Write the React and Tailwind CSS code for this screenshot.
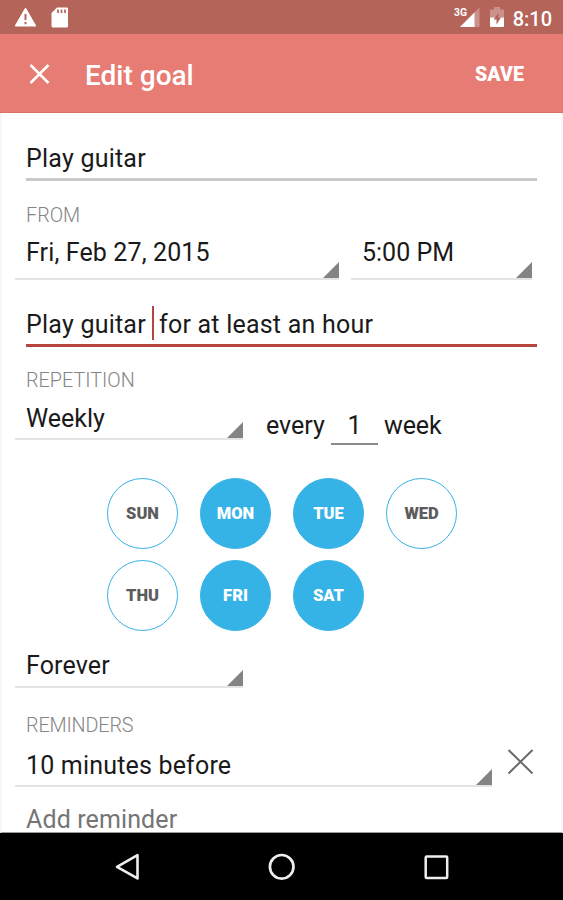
const DAYS = [
  { name: "SUN", on: false },
  { name: "MON", on: true },
  { name: "TUE", on: true },
  { name: "WED", on: false },
  { name: "THU", on: false },
  { name: "FRI", on: true },
  { name: "SAT", on: true },
];

function Corner() {
  return (
    <svg className="h-4 w-4 shrink-0" viewBox="0 0 16 16">
      <path d="M16 0V16H0Z" fill="#848484" />
    </svg>
  );
}

function Spinner({ className, children }) {
  return (
    <div className={`flex items-end justify-between border-b-2 border-[#e4e4e4] pl-[11px] ${className}`}>
      <span className="self-start leading-8 whitespace-nowrap">{children}</span>
      <Corner />
    </div>
  );
}

function Label({ className, children }) {
  return (
    <div className={`h-6 text-[19.8px] leading-7 font-light text-[#858585] ${className}`}>
      {children}
    </div>
  );
}

function StatusBar() {
  return (
    <div className="flex h-[34px] items-center bg-[#b5645a] text-white">
      <svg className="ml-[14px] h-[20px] w-[23px]" viewBox="0 0 23 20">
        <path d="M11.5 1 21.8 19H1.2Z" fill="#fff" stroke="#fff" strokeWidth="1" strokeLinejoin="round" />
        <path d="M11.5 7V13M11.5 15V17.2" stroke="#b5645a" strokeWidth="2" />
      </svg>
      <svg className="ml-[14px] h-[21px] w-[17px]" viewBox="0 0 17 21">
        <path d="M6 .5H15.5A1.3 1.3 0 0 1 17 2V19A1.5 1.5 0 0 1 15.500 20.500H2A1.500 1.500 0 0 1 .5 19V6Z" fill="#fff" />
        <path d="M7 2.500V6M10.500 2.500V6M14 2.500V6" stroke="#b5645a" strokeWidth="1.700" />
      </svg>
      <div className="ml-auto flex items-center">
        <svg className="h-[24px] w-[27px]" viewBox="0 0 27 24">
          <path d="M25.500 2.500V22H6Z" fill="#fff" opacity=".3" />
          <path d="M20.500 7.500V22H6Z" fill="#fff" />
          <text x="0" y="11" fontSize="11" fontWeight="700" fill="#fff" fontFamily="Roboto, sans-serif" textLength="13" lengthAdjust="spacingAndGlyphs">3G</text>
        </svg>
        <svg className="ml-2 h-[24px] w-[16px]" viewBox="0 0 16 24">
          <path d="M5 2H11V4.500H14Q15 4.500 15 5.500V12.500H1V5.500Q1 4.500 2 4.500H5Z" fill="#fff" opacity=".3" />
          <path d="M1 12.500H15V21Q15 22 14 22H2Q1 22 1 21Z" fill="#fff" />
          <path d="M9.500 8 4.500 14.500H7.500V19.500L12 12.500H9.500Z" fill="#b5645a" />
        </svg>
        <span className="mr-[11px] ml-[8px] pt-[3px] text-[20px] leading-6 font-medium">8:10</span>
      </div>
    </div>
  );
}

function Header() {
  return (
    <div className="flex h-[79px] items-center border-b border-[#dc7069] bg-[#e67c74] pt-[3px] text-white">
      <svg className="ml-[29px] h-[21px] w-[21px]" viewBox="0 0 21 21">
        <path d="M1.500 1 19.500 19M19.500 1 1.500 19" stroke="#fff" strokeWidth="2.500" />
      </svg>
      <h1 className="ml-[35px] pt-[2px] text-[28px] leading-8 font-medium">Edit goal</h1>
      <button className="mr-[39px] ml-auto pt-px text-[19.5px] leading-6 font-black tracking-[0.1px]">SAVE</button>
    </div>
  );
}

function NavBar() {
  return (
    <div className="flex h-[67px] items-center justify-between bg-black pr-[113px] pl-[114px]">
      <svg className="h-[28px] w-[28px]" viewBox="0 0 28 28">
        <path d="M3 13.800 23.500 2.200V25.400Z" fill="none" stroke="#eee" strokeWidth="2.600" strokeLinejoin="round" />
      </svg>
      <svg className="h-[28px] w-[28px]" viewBox="0 0 28 28">
        <circle cx="13.700" cy="13.800" r="11.800" fill="none" stroke="#eee" strokeWidth="2.700" />
      </svg>
      <svg className="h-[28px] w-[28px]" viewBox="0 0 28 28">
        <rect x="3.700" y="3.500" width="21.500" height="21.500" rx="1" fill="none" stroke="#eee" strokeWidth="2.500" />
      </svg>
    </div>
  );
}

export default function App() {
  return (
    <div className="flex h-[900px] w-[563px] flex-col overflow-hidden bg-white font-[Roboto,sans-serif] text-[25px] text-[#1a1a1a]">
      <StatusBar />
      <Header />
      <main className="flex h-[720px] flex-col border-x-2 border-b border-x-[#f7f7f7] border-b-[#9a9a9a] pl-[13px]">
        <div className="mt-[30px] ml-[11px] h-[38px] w-[511px] border-b-3 border-[#c9c9c9] leading-8 tracking-[0.22px]">Play guitar</div>

        <Label className="mt-[21px] ml-[11px]">FROM</Label>
        <div className="mt-[11px] flex gap-3">
          <Spinner className="h-[43px] w-[324px] tracking-[0.12px]">Fri, Feb 27, 2015</Spinner>
          <Spinner className="h-[43px] w-[181px]">5:00 PM</Spinner>
        </div>

        <div className="mt-[26px] ml-[11px] flex h-[42px] w-[511px] border-b-3 border-[#b5463e] tracking-[0.22px]">
          <span className="w-[126px] pt-[3px] leading-8">Play guitar</span>
          <span className="mr-[5px] h-[34px] w-[2px] bg-[#b5463e]" />
          <span className="pt-[3px] leading-8">for at least an hour</span>
        </div>

        <Label className="mt-[20px] ml-[11px]">REPETITION</Label>
        <div className="mt-[11px] flex h-[42px]">
          <Spinner className="h-[38px] w-[228px] pt-px">Weekly</Spinner>
          <div className="ml-[23px] flex pt-[8px] leading-8">
            <span className="w-[58px]">every</span>
            <span className="mr-[6px] ml-[7px] h-[35px] w-[47px] border-b-2 border-[#8a8a8a] text-center">1</span>
            <span className="tracking-[-0.1px]">week</span>
          </div>
        </div>

        <div className="mt-[34px] ml-[92px] grid w-[350px] grid-cols-4 gap-x-[22px] gap-y-[11px]">
          {DAYS.map((day) => (
            <div
              key={day.name}
              className={`flex h-[71px] w-[71px] items-center justify-center rounded-full border pt-[2px] text-[16.5px] font-black ${
                day.on ? "border-[#36b3e6] bg-[#36b3e6] text-white" : "border-[#36b3e6] bg-white text-[#5c5c5c]"
              }`}
            >
              {day.name}
            </div>
          ))}
        </div>

        <Spinner className="mt-[19px] h-[38px] w-[228px] tracking-[0.15px]">Forever</Spinner>

        <Label className="mt-[24px] ml-[11px] tracking-[-0.15px]">REMINDERS</Label>
        <div className="mt-[13px] flex">
          <Spinner className="h-[38px] w-[477px] pt-px tracking-[0.18px]">10 minutes before</Spinner>
          <svg className="ml-[15px] h-[27px] w-[27px]" viewBox="0 0 27 27">
            <path d="M1.500 1 25.500 24.500M25.500 1 1.500 24.500" stroke="#6a6a6a" strokeWidth="2" />
          </svg>
        </div>
        <div className="mt-[17px] ml-[11px] h-7 leading-8 tracking-[0.12px] text-[#757575]">Add reminder</div>
      </main>
      <NavBar />
    </div>
  );
}
